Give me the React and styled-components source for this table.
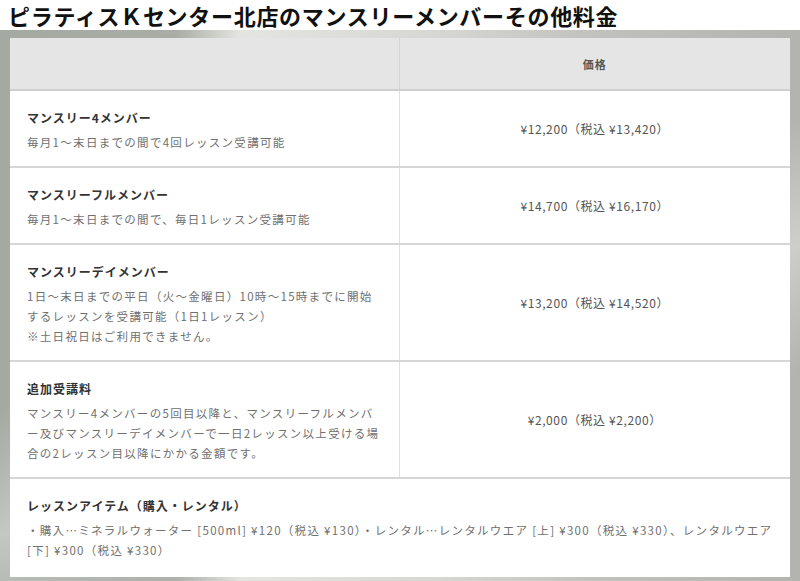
import React from "react";
import styled, { createGlobalStyle } from "styled-components";

const GlobalStyle = createGlobalStyle`
	html, body {
		margin: 0;
		padding: 0;
		background: #ffffff;
	}
	body {
		font-family: "Noto Sans CJK JP", "Noto Sans", sans-serif;
		width: 800px;
		height: 581px;
		overflow: hidden;
	}
`;

const Page = styled.div`
	width: 800px;
	height: 581px;
	display: flex;
	flex-direction: column;
`;

const Title = styled.h1`
	margin: 0;
	height: 30px;
	padding-left: 8px;
	font-size: 22px;
	line-height: 30px;
	font-weight: 700;
	color: #111;
	letter-spacing: 0.7px;
	white-space: nowrap;
`;

const Backdrop = styled.div`
	flex: 1;
	padding: 8px 10px 0 10px;
	background:
		linear-gradient(160deg, transparent 0%, transparent 45%, rgba(255, 255, 255, 0.35) 60%, transparent 75%),
		linear-gradient(90deg, #a4a9a2 0%, #a9ada6 22%, #e4e4e0 30%, #d6d6d2 55%, #c0c1bc 75%, #b3b4af 100%);
`;

const Table = styled.table`
	width: 780px;
	border-collapse: collapse;
	table-layout: fixed;
	background: #ffffff;
`;

const HeadCell = styled.th`
	height: 51px;
	padding: 0;
	background: #e5e5e5;
	font-size: 11px;
	font-weight: 700;
	color: #555;
	letter-spacing: 1px;
	text-align: center;
	border-bottom: 2px solid #cfcfcf;
	border-left: ${(p) => (p.$divided ? "1px solid #d4d4d4" : "none")};
`;

const Row = styled.tr`
	border-bottom: 2px solid #d6d6d6;
	&:last-child {
		border-bottom: none;
	}
`;

const LabelCell = styled.td`
	padding: 16px 17px ${(p) => (p.$last ? "17px" : "14px")};
	vertical-align: middle;
`;

const PriceCell = styled.td`
	padding: 0 10px;
	text-align: center;
	vertical-align: middle;
	font-size: 12px;
	color: #555;
	letter-spacing: 0.6px;
	border-left: 1px solid #e0e0e0;
`;

const ItemName = styled.div`
	font-size: 12px;
	line-height: 22px;
	font-weight: 700;
	color: #333;
	letter-spacing: 1px;
	margin-bottom: 3px;
`;

const ItemNote = styled.div`
	font-size: 11.5px;
	line-height: 20px;
	color: #707070;
	letter-spacing: 1.3px;
`;

const plans = [
	{
		name: "マンスリー4メンバー",
		notes: ["毎月1〜末日までの間で4回レッスン受講可能"],
		price: "¥12,200（税込 ¥13,420）",
	},
	{
		name: "マンスリーフルメンバー",
		notes: ["毎月1〜末日までの間で、毎日1レッスン受講可能"],
		price: "¥14,700（税込 ¥16,170）",
	},
	{
		name: "マンスリーデイメンバー",
		notes: [
			"1日〜末日までの平日（火〜金曜日）10時〜15時までに開始",
			"するレッスンを受講可能（1日1レッスン）",
			"※土日祝日はご利用できません。",
		],
		price: "¥13,200（税込 ¥14,520）",
	},
	{
		name: "追加受講料",
		notes: [
			"マンスリー4メンバーの5回目以降と、マンスリーフルメンバ",
			"ー及びマンスリーデイメンバーで一日2レッスン以上受ける場",
			"合の2レッスン目以降にかかる金額です。",
		],
		price: "¥2,000（税込 ¥2,200）",
	},
];

const App = () => {
	return (
		<Page>
			<GlobalStyle />
			<Title>ピラティスＫセンター北店のマンスリーメンバーその他料金</Title>
			<Backdrop>
				<Table>
					<colgroup>
						<col style={{ width: "389px" }} />
						<col />
					</colgroup>
					<thead>
						<tr>
							<HeadCell></HeadCell>
							<HeadCell $divided>価格</HeadCell>
						</tr>
					</thead>
					<tbody>
						{plans.map((plan) => (
							<Row key={plan.name}>
								<LabelCell>
									<ItemName>{plan.name}</ItemName>
									{plan.notes.map((line) => (
										<ItemNote key={line}>{line}</ItemNote>
									))}
								</LabelCell>
								<PriceCell>{plan.price}</PriceCell>
							</Row>
						))}
						<Row>
							<LabelCell colSpan={2} $last>
								<ItemName>レッスンアイテム（購入・レンタル）</ItemName>
								<ItemNote>
									・購入…ミネラルウォーター [500ml] ¥120（税込 ¥130）・レンタル…レンタルウエア [上] ¥300（税込 ¥330）、レンタルウエア
								</ItemNote>
								<ItemNote>[下] ¥300（税込 ¥330）</ItemNote>
							</LabelCell>
						</Row>
					</tbody>
				</Table>
			</Backdrop>
		</Page>
	);
};

export default App;
